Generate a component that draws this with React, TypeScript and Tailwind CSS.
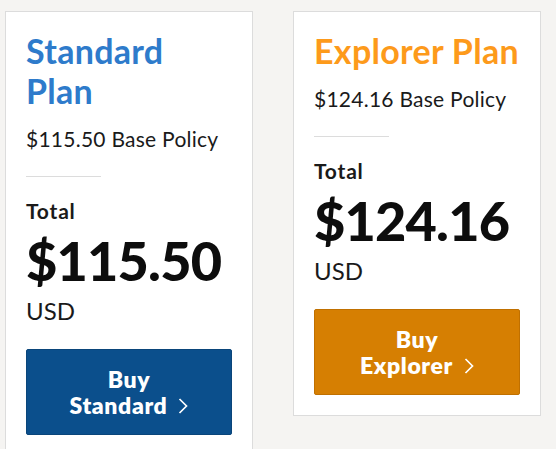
import React from 'react';

interface Plan {
    name: string;
    base: string;
    total: string;
    button: string;
    titleClass: string;
    buttonClass: string;
}

const plans: Plan[] = [
    {
        name: 'Standard Plan',
        base: '$115.50',
        total: '$115.50',
        button: 'Standard',
        titleClass: 'text-[#2e7bcb] w-[180px]',
        buttonClass: 'bg-[#0b4f8c] border-[#0a457a]',
    },
    {
        name: 'Explorer Plan',
        base: '$124.16',
        total: '$124.16',
        button: 'Explorer',
        titleClass: 'text-[#fd9a1b]',
        buttonClass: 'bg-[#d67f02] border-[#c07000]',
    },
];

const Chevron = () => (
    <svg width="10" height="16" viewBox="0 0 10 16" className="inline-block ml-[11px] align-baseline">
        <path d="M1.5 1 L8.5 8 L1.5 15" fill="none" stroke="white" strokeWidth="1.7" />
    </svg>
);

const PlanCard: React.FC<{ plan: Plan }> = ({ plan }) => (
    <div className="w-[248px] shrink-0 bg-white border border-[#dcdcdc] px-5 pt-[19px] pb-5">
        <h2 className={`text-[34px] font-bold leading-[40px] tracking-[0.3px] ${plan.titleClass}`}>{plan.name}</h2>
        <p className="mt-[14px] text-[21px] leading-[28px] tracking-[0.25px] text-[#1a1a1a]">{plan.base} Base Policy</p>
        <div className="mt-[23px] w-[75px] h-px bg-[#dcdcdc]" />
        <p className="mt-5 text-[21px] leading-[28px] font-bold tracking-[0.8px] text-[#1a1a1a]">Total</p>
        <p className="mt-[9px] text-[54px] leading-[54px] font-black tracking-[-0.8px] text-[#0d0d0d]">{plan.total}</p>
        <p className="mt-[9px] text-[24px] leading-[28px] text-[#1a1a1a]">USD</p>
        <button
            className={`mt-6 w-full py-4 rounded-[2px] border text-white text-[23px] leading-[26px] font-extrabold tracking-[0.6px] text-center ${plan.buttonClass}`}
        >
            Buy
            <br />
            {plan.button}
            <Chevron />
        </button>
    </div>
);

export default function App() {
    return (
        <div
            className="w-[556px] h-[449px] overflow-hidden bg-[#f5f4f2] pl-[5px] pt-[11px] flex items-start gap-10"
            style={{ fontFamily: 'Lato, "Liberation Sans", sans-serif' }}
        >
            {plans.map((plan) => (
                <PlanCard key={plan.name} plan={plan} />
            ))}
        </div>
    );
}
